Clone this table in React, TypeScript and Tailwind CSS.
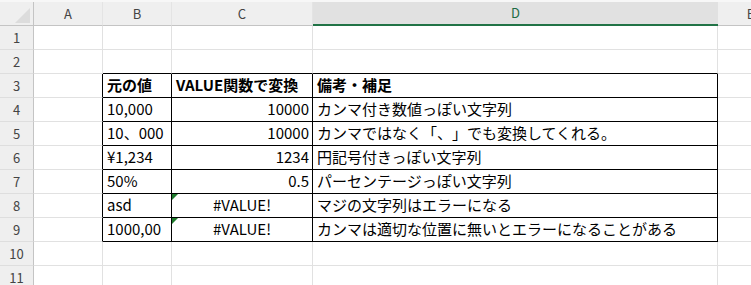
import React from 'react';

const cols = ['A', 'B', 'C', 'D', 'E'];

type Row = {
    b: string;
    c: string;
    d: string;
    bold?: boolean;
    error?: boolean;
};

const table: Row[] = [
    { b: '元の値', c: 'VALUE関数で変換', d: '備考・補足', bold: true },
    { b: '10,000', c: '10000', d: 'カンマ付き数値っぽい文字列' },
    { b: '10、000', c: '10000', d: 'カンマではなく「、」でも変換してくれる。' },
    { b: '¥1,234', c: '1234', d: '円記号付きっぽい文字列' },
    { b: '50%', c: '0.5', d: 'パーセンテージっぽい文字列' },
    { b: 'asd', c: '#VALUE!', d: 'マジの文字列はエラーになる', error: true },
    { b: '1000,00', c: '#VALUE!', d: 'カンマは適切な位置に無いとエラーになることがある', error: true },
];

const grid = 'border-r border-b border-[#e1e1e1]';
const inTable = 'border-r border-b border-black';

function RowHead({ n }: { n: number }) {
    return (
        <div className="flex items-center justify-center bg-[#efefef] border-r border-r-[#c4c4c4] border-b border-b-[#dedede] text-[13px] text-[#444]">
            {n}
        </div>
    );
}

function Cell({ className = '', children }: { className?: string; children?: React.ReactNode }) {
    return <div className={`relative flex items-center overflow-visible whitespace-nowrap px-[4px] ${className}`}>{children}</div>;
}

export default function App() {
    return (
        <div
            className="w-[751px] h-[285px] overflow-hidden bg-white border-t-2 border-[#f7f7f7] text-black [text-spacing-trim:space-all]"
            style={{ fontFamily: '"Noto Sans CJK JP", "Noto Sans", sans-serif' }}
        >
            <div className="grid w-[784px] grid-cols-[34px_69px_69px_141px_405px_66px] grid-rows-[24px_repeat(11,24px)]">
                {/* column headers */}
                <div className="relative bg-[#efefef] border-r border-b border-[#c4c4c4]">
                    <div className="absolute left-[15px] top-[6px] w-0 h-0 border-l-[15px] border-l-transparent border-b-[15px] border-b-[#dcdcdc]" />
                </div>
                {cols.map((c) => (
                    <div
                        key={c}
                        className={
                            c === 'D'
                                ? 'flex items-center justify-center bg-[#e1e1e1] border-b-2 border-[#217346] text-[13px] text-[#1d6b45]'
                                : 'flex items-center justify-center bg-[#efefef] border-r border-r-[#e4e4e4] border-b border-b-[#c4c4c4] text-[13px] text-[#444]'
                        }
                    >
                        {c}
                    </div>
                ))}

                {/* rows 1-2 */}
                {[1, 2].map((n) => (
                    <React.Fragment key={n}>
                        <RowHead n={n} />
                        <Cell className={grid} />
                        <Cell className={n === 2 ? 'border-r border-r-[#e1e1e1] border-b border-b-black' : grid} />
                        <Cell className={n === 2 ? 'border-r border-r-[#e1e1e1] border-b border-b-black' : grid} />
                        <Cell className={n === 2 ? 'border-r border-r-[#e1e1e1] border-b border-b-black' : grid} />
                        <Cell className={grid} />
                    </React.Fragment>
                ))}

                {/* table rows 3-9 */}
                {table.map((r, i) => (
                    <React.Fragment key={i}>
                        <RowHead n={i + 3} />
                        <Cell className="border-r border-r-black border-b border-b-[#e1e1e1]" />
                        <Cell className={`${inTable} text-[15px] ${r.bold ? 'font-bold' : ''}`}>{r.b}</Cell>
                        <Cell
                            className={`${inTable} text-[15px] ${
                                r.bold ? 'font-bold' : r.error ? 'justify-center' : 'justify-end pr-[3px]'
                            }`}
                        >
                            {r.error && (
                                <span className="absolute left-0 top-0 w-0 h-0 border-t-[6px] border-t-[#1e7a2c] border-r-[6px] border-r-transparent" />
                            )}
                            {r.c}
                        </Cell>
                        <Cell className={`${inTable} text-[15px] ${r.bold ? 'font-bold' : ''}`}>{r.d}</Cell>
                        <Cell className={grid} />
                    </React.Fragment>
                ))}

                {/* rows 10-11 */}
                {[10, 11].map((n) => (
                    <React.Fragment key={n}>
                        <RowHead n={n} />
                        <Cell className={grid} />
                        <Cell className={grid} />
                        <Cell className={grid} />
                        <Cell className={grid} />
                        <Cell className={grid} />
                    </React.Fragment>
                ))}
            </div>
        </div>
    );
}
